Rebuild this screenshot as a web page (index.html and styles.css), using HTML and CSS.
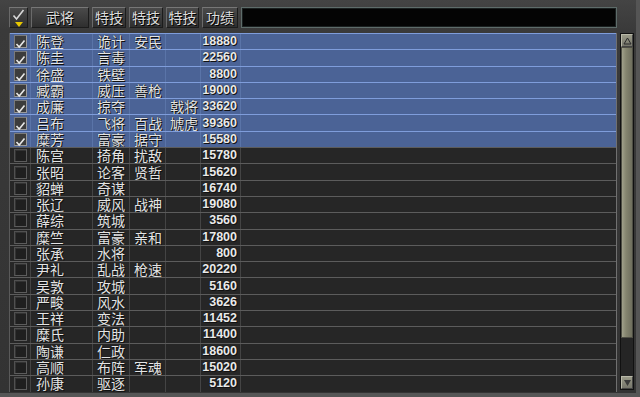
FILE: index.html
```html
<!DOCTYPE html>
<html lang="zh">
<head>
<meta charset="utf-8">
<link rel="stylesheet" href="styles.css">
</head>
<body>
<div class="frame">
  <div class="header">
    <div class="hbtn hcheck">
      <svg class="hck" width="13" height="12" viewBox="0 0 13 12"><path d="M1.5 6.5 L4.5 10 L11.5 1" fill="none" stroke="#d8d8d8" stroke-width="1.6"/></svg>
      <svg class="htri" width="8" height="5" viewBox="0 0 8 5"><path d="M0 0 H8 L4 5 Z" fill="#e8c800"/></svg>
    </div>
    <div class="hbtn w58">武将</div>
    <div class="hbtn w34">特技</div>
    <div class="hbtn w34">特技</div>
    <div class="hbtn w33">特技</div>
    <div class="hbtn w36">功绩</div>
    <div class="field"></div>
  </div>
  <div class="body">
    <div class="table" id="table"></div>
    <div class="scroll">
      <div class="sbtn"><svg width="9" height="8" viewBox="0 0 9 8"><path d="M4.5 1 L8 7 H1 Z" fill="none" stroke="#2a2a2a" stroke-width="1"/></svg></div>
      <div class="thumb"></div>
      <div class="track"></div>
      <div class="sbtn"><svg width="9" height="8" viewBox="0 0 9 8"><path d="M1 1 H8 L4.5 7 Z" fill="#3a3a3a"/></svg></div>
    </div>
  </div>
</div>
<script src="app.js"></script>
</body>
</html>
```
FILE: app.js
```js
const data = [
  [1,"陈登","诡计","安民","","18880"],
  [1,"陈圭","言毒","","","22560"],
  [1,"徐盛","铁壁","","","8800"],
  [1,"臧霸","威压","善枪","","19000"],
  [1,"成廉","掠夺","","戟将","33620"],
  [1,"吕布","飞将","百战","虓虎","39360"],
  [1,"糜芳","富豪","据守","","15580"],
  [0,"陈宫","掎角","扰敌","","15780"],
  [0,"张昭","论客","贤哲","","15620"],
  [0,"貂蝉","奇谋","","","16740"],
  [0,"张辽","威风","战神","","19080"],
  [0,"薛综","筑城","","","3560"],
  [0,"糜竺","富豪","亲和","","17800"],
  [0,"张承","水将","","","800"],
  [0,"尹礼","乱战","枪速","","20220"],
  [0,"吴敦","攻城","","","5160"],
  [0,"严畯","风水","","","3626"],
  [0,"王祥","变法","","","11452"],
  [0,"糜氏","内助","","","11400"],
  [0,"陶谦","仁政","","","18600"],
  [0,"高顺","布阵","军魂","","15020"],
  [0,"孙康","驱逐","","","5120"]
];
const t = document.getElementById('table');
const check = '<svg width="11" height="10" viewBox="0 0 11 10"><path d="M1.5 5 L4.2 8 L9.5 1.5" fill="none" stroke="#e8e8e8" stroke-width="1.6"/></svg>';
for (const r of data) {
  const row = document.createElement('div');
  row.className = 'row ' + (r[0] ? 'sel' : 'dark');
  row.innerHTML =
    '<div class="c cb"><span class="box">' + (r[0] ? check : '') + '</span></div>' +
    '<div class="c name"><span>' + r[1] + '</span></div>' +
    '<div class="c sk"><span>' + r[2] + '</span></div>' +
    '<div class="c sk"><span>' + r[3] + '</span></div>' +
    '<div class="c sk"><span>' + r[4] + '</span></div>' +
    '<div class="c num"><span>' + r[5] + '</span></div>' +
    '<div class="c rest"></div>';
  t.appendChild(row);
}
```
FILE: styles.css
```css
* { box-sizing: border-box; }
html, body { margin: 0; padding: 0; }
body {
  width: 640px; height: 397px; overflow: hidden;
  background: #2e2e2e;
  font-family: "Noto Sans CJK SC", "Noto Sans", sans-serif;
}
.frame {
  width: 640px; height: 397px;
  background: linear-gradient(#444 0, #3a3a3a 30px, #333 100%);
  border-right: 4px solid #555;
  border-bottom: 4px solid #565656;
  padding: 7px 0 0 9px;
}
.header { display: flex; gap: 3px; height: 21px; width: 608px; }
.hbtn {
  height: 21px;
  background: linear-gradient(#4a4a4a, #2f2f2f);
  border: 1px solid;
  border-color: #777 #1c1c1c #1c1c1c #6a6a6a;
  color: #dcdcdc;
  font-size: 14px; line-height: 19px;
  text-align: center;
  text-shadow: 1px 1px 0 #000;
}
.hcheck { width: 19px; position: relative; }
.hck { position: absolute; left: 2px; top: 1px; }
.htri { position: absolute; left: 5px; top: 14px; }
.w58 { width: 58px; }
.w34 { width: 34px; }
.w33 { width: 33px; }
.w36 { width: 36px; }
.field {
  flex: 1;
  background: #040404;
  border: 1px solid #5e6c6a;
  box-shadow: inset 0 0 0 1px #1a1f1f;
}
.body { display: flex; margin-top: 5px; gap: 3px; }
.table {
  width: 608px;
  border-left: 1px solid #5a5a5a;
  border-right: 1px solid #707070;
  display: flex; flex-direction: column;
}
.row {
  height: 16.3px;
  display: grid;
  grid-template-columns: 21px 62px 37px 36px 35px 40px 1fr;
  border-top: 1px solid #5c5c5c;
  color: #e4e4e4;
  font-size: 14px;
  line-height: 15px;
  text-shadow: 1px 1px 0 #111, 0 0 1px #000;
}
.row.sel { background: #4b6396; border-top-color: #7f9ddb; }
.row.dark { background: #262626; }
.c {
  border-right: 1px solid #444;
  white-space: nowrap;
  display: flex; align-items: center;
}
.c span { display: block; line-height: 15px; }
.row.sel .c { border-right-color: #5a74a8; }
.c.rest { border-right: none; }
.cb { justify-content: center; }
.box {
  width: 13px; height: 13px;
  border: 1px solid;
  border-color: #7a7a7a #9a9a9a #9a9a9a #7a7a7a;
  background: #3c3c3c;
  display: flex; align-items: center; justify-content: center;
}
.row.dark .box { border-color: #505050 #5c5c5c #5c5c5c #505050; background: #1f1f1f; box-shadow: inset 1px 1px 0 #333; }
.name { padding-left: 5px; }
.sk { padding-left: 4px; }
.num {
  justify-content: flex-end; padding-right: 3px;
  font-family: "Liberation Sans", sans-serif; font-weight: bold; font-size: 12.5px;
  color: #eaeaea;
}
.scroll {
  width: 14px; height: 357px;
  display: flex; flex-direction: column;
  background: #222;
  border: 1px solid #111;
}
.sbtn {
  height: 13px; flex: none;
  background: linear-gradient(#9a9a88, #75756a);
  border: 1px solid; border-color: #b8b8a8 #444 #444 #b8b8a8;
  display: flex; align-items: center; justify-content: center;
}
.thumb {
  height: 291px; flex: none;
  background: linear-gradient(90deg, #a0a08a, #85856f 40%, #6f6f5e);
  border: 1px solid #4e4e44;
}
.track { flex: 1; background: #252525; }
```
